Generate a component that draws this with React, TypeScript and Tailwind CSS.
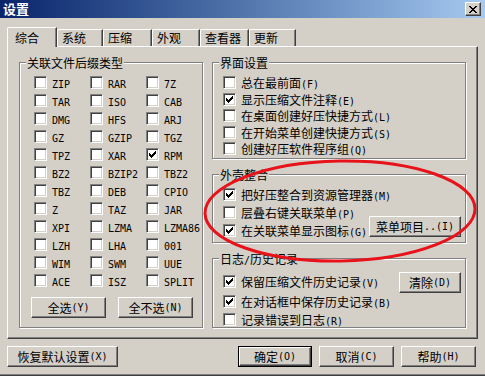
import React from 'react';

const exts: [string, boolean?][][] = [
  [['ZIP'], ['RAR'], ['7Z']],
  [['TAR'], ['ISO'], ['CAB']],
  [['DMG'], ['HFS'], ['ARJ']],
  [['GZ'], ['GZIP'], ['TGZ']],
  [['TPZ'], ['XAR'], ['RPM', true]],
  [['BZ2'], ['BZIP2'], ['TBZ2']],
  [['TBZ'], ['DEB'], ['CPIO']],
  [['Z'], ['TAZ'], ['JAR']],
  [['XPI'], ['LZMA'], ['LZMA86']],
  [['LZH'], ['LHA'], ['001']],
  [['WIM'], ['SWM'], ['UUE']],
  [['ACE'], ['ISZ'], ['SPLIT']],
];

const tabs: [string, number][] = [
  ['综合', 50],
  ['系统', 46],
  ['压缩', 49],
  ['外观', 48],
  ['查看器', 49],
  ['更新', 47],
];

// ascii runs get the narrow mono font, like SimSun's half-width glyphs
const Txt: React.FC<{ s: string }> = ({ s }) => (
  <>
    {s
      .split(/([\x20-\x7e]+)/)
      .filter(Boolean)
      .map((p, i) =>
        /[\x20-\x7e]/.test(p[0]) ? (
          <span key={i} className="font-['DejaVu_Sans_Mono',monospace] text-[10px]">
            {p}
          </span>
        ) : (
          <span key={i}>{p}</span>
        )
      )}
  </>
);

const Check: React.FC<{ on?: boolean }> = ({ on }) => (
  <span className="flex h-[13px] w-[13px] shrink-0 border border-t-[#808080] border-l-[#808080] border-r-white border-b-white bg-white shadow-[inset_1px_1px_0_#404040,inset_-1px_-1px_0_#d4d0c8]">
    {on && (
      <svg className="m-[2px]" width="7" height="7" viewBox="0 0 7 7" shapeRendering="crispEdges">
        <path d="M0 2h1v3H0zM1 3h1v3H1zM2 4h1v3H2zM3 3h1v3H3zM4 2h1v3H4zM5 1h1v3H5zM6 0h1v3H6z" fill="#000" />
      </svg>
    )}
  </span>
);

const Opt: React.FC<{ label: string; on?: boolean; h?: string }> = ({ label, on, h = 'h-[18px]' }) => (
  <div className={`flex ${h} items-start gap-[5px]`}>
    <span className="mt-[2px]">
      <Check on={on} />
    </span>
    <span className="whitespace-nowrap leading-[18px]">
      <Txt s={label} />
    </span>
  </div>
);

const Btn: React.FC<{ label: string; className?: string; def?: boolean }> = ({ label, className = '', def }) => {
  const face = (
    <div className="flex h-full w-full items-center justify-center whitespace-nowrap border border-t-white border-l-white border-r-[#404040] border-b-[#404040] bg-[#d4d0c8] leading-[14px] shadow-[inset_-1px_-1px_0_#808080]">
      <Txt s={label} />
    </div>
  );
  return <div className={`${def ? 'border border-black' : ''} ${className}`}>{face}</div>;
};

const Group: React.FC<{ title: string; className?: string; children: React.ReactNode }> = ({ title, className = '', children }) => (
  <div className={`border border-[#808080] shadow-[1px_1px_0_#fff,inset_1px_1px_0_#fff] ${className}`}>
    <div className="-mt-[7px] ml-[6px] w-fit bg-[#d4d0c8] px-[1px] leading-[14px]">
      <Txt s={title} />
    </div>
    {children}
  </div>
);

export default function App() {
  return (
    <div className="relative flex h-[376px] w-[485px] flex-col overflow-hidden bg-[#d4d0c8] font-['Noto_Sans_CJK_SC',sans-serif] text-[12px] text-black shadow-[inset_0_-1px_0_#404040,inset_0_-2px_0_#808080]">
      {/* title bar */}
      <div className="flex h-[18px] shrink-0 items-center justify-between bg-linear-to-r from-[#0a246a] to-[#a6caf0] pl-[3px] pr-[4px]">
        <span className="text-[13px] font-bold leading-[14px] text-white">设置</span>
        <div className="flex h-[14px] w-[16px] items-center justify-center border border-t-white border-l-white border-r-[#404040] border-b-[#404040] bg-[#d4d0c8] shadow-[inset_-1px_-1px_0_#808080]">
          <svg width="8" height="7" viewBox="0 0 8 7" shapeRendering="crispEdges">
            <path d="M0 0h2v1H0zM6 0h2v1H6zM1 1h2v1H1zM5 1h2v1H5zM2 2h4v1H2zM3 3h2v1H3zM2 4h4v1H2zM1 5h2v1H1zM5 5h2v1H5zM0 6h2v1H0zM6 6h2v1H6z" fill="#000" />
          </svg>
        </div>
      </div>

      {/* tabs */}
      <div className="mt-[9px] flex h-[19px] shrink-0 items-end pl-[7px]">
        {tabs.map(([t, w], i) =>
          i === 0 ? (
            <div
              key={t}
              style={{ width: w }}
              className="relative z-10 -mb-px h-[20px] rounded-tl-[2px] border-t border-l border-r border-t-white border-l-white border-r-[#404040] bg-[#d4d0c8] pl-[7px] pt-[3px] leading-[14px] shadow-[inset_-1px_0_0_#808080]"
            >
              {t}
            </div>
          ) : (
            <div
              key={t}
              style={{ width: w }}
              className="h-[17px] rounded-tl-[2px] border-t border-l border-r border-t-white border-l-white border-r-[#404040] pl-[4px] pt-[1px] leading-[14px] shadow-[inset_-1px_0_0_#808080]"
            >
              {t}
            </div>
          )
        )}
      </div>

      {/* tab page */}
      <div className="ml-[7px] flex h-[293px] w-[471px] shrink-0 gap-[9px] border border-t-white border-l-white border-r-[#404040] border-b-[#404040] pl-[11px] pt-[15px] shadow-[inset_-1px_-1px_0_#808080]">
        <Group title="关联文件后缀类型" className="h-[266px] w-[184px] shrink-0">
          <div className="ml-[14px] mt-[4px] grid grid-cols-[56px_56px_56px]">
            {exts.flat().map(([e, on]) => (
              <Opt key={e} label={e} on={on} />
            ))}
          </div>
          <div className="ml-[11px] mt-[7px] flex gap-[12px]">
            <Btn label="全选(Y)" className="h-[21px] w-[75px]" />
            <Btn label="全不选(N)" className="h-[21px] w-[75px]" />
          </div>
        </Group>

        <div className="flex w-[254px] flex-col gap-[15px]">
          <Group title="界面设置" className="h-[97px]">
            <div className="ml-[10px] mt-[4px] flex flex-col">
              <Opt h="h-[16.5px]" label="总在最前面(F)" />
              <Opt h="h-[16.5px]" label="显示压缩文件注释(E)" on />
              <Opt h="h-[16.5px]" label="在桌面创建好压快捷方式(L)" />
              <Opt h="h-[16.5px]" label="在开始菜单创建快捷方式(S)" />
              <Opt h="h-[16.5px]" label="创建好压软件程序组(Q)" />
            </div>
          </Group>

          <Group title="外壳整合" className="h-[69px]">
            <div className="ml-[10px] mt-[4px] flex flex-col">
              <Opt label="把好压整合到资源管理器(M)" on />
              <Opt label="层叠右键关联菜单(P)" />
              <div className="flex items-start">
                <Opt label="在关联菜单显示图标(G)" on />
                <Btn label="菜单项目..(I)" className="-mt-[6px] ml-auto mr-[4px] h-[21px] w-[92px]" />
              </div>
            </div>
          </Group>

          <Group title="日志/历史记录" className="h-[70px]">
            <div className="ml-[10px] mt-[5px] flex flex-col">
              <div className="flex items-start">
                <Opt label="保留压缩文件历史记录(V)" on />
                <Btn label="清除(D)" className="-mt-[1px] ml-auto mr-[4px] h-[21px] w-[62px]" />
              </div>
              <Opt label="在对话框中保存历史记录(B)" on />
              <Opt label="记录错误到日志(R)" />
            </div>
          </Group>
        </div>
      </div>

      {/* bottom buttons */}
      <div className="mt-[7px] flex h-[21px] shrink-0 pl-[7px] pr-[9px]">
        <Btn label="恢复默认设置(X)" className="h-[21px] w-[111px]" />
        <div className="ml-auto flex gap-[7px]">
          <Btn label="确定(O)" def className="h-[21px] w-[74px]" />
          <Btn label="取消(C)" className="h-[21px] w-[75px]" />
          <Btn label="帮助(H)" className="h-[21px] w-[75px]" />
        </div>
      </div>

      {/* red annotation drawn over the dialog */}
      <svg className="pointer-events-none absolute inset-0" width="485" height="376">
        <ellipse cx="340" cy="211" rx="135" ry="50" fill="none" stroke="#e8121a" strokeWidth="3" transform="rotate(-1 340 211)" />
      </svg>
    </div>
  );
}
